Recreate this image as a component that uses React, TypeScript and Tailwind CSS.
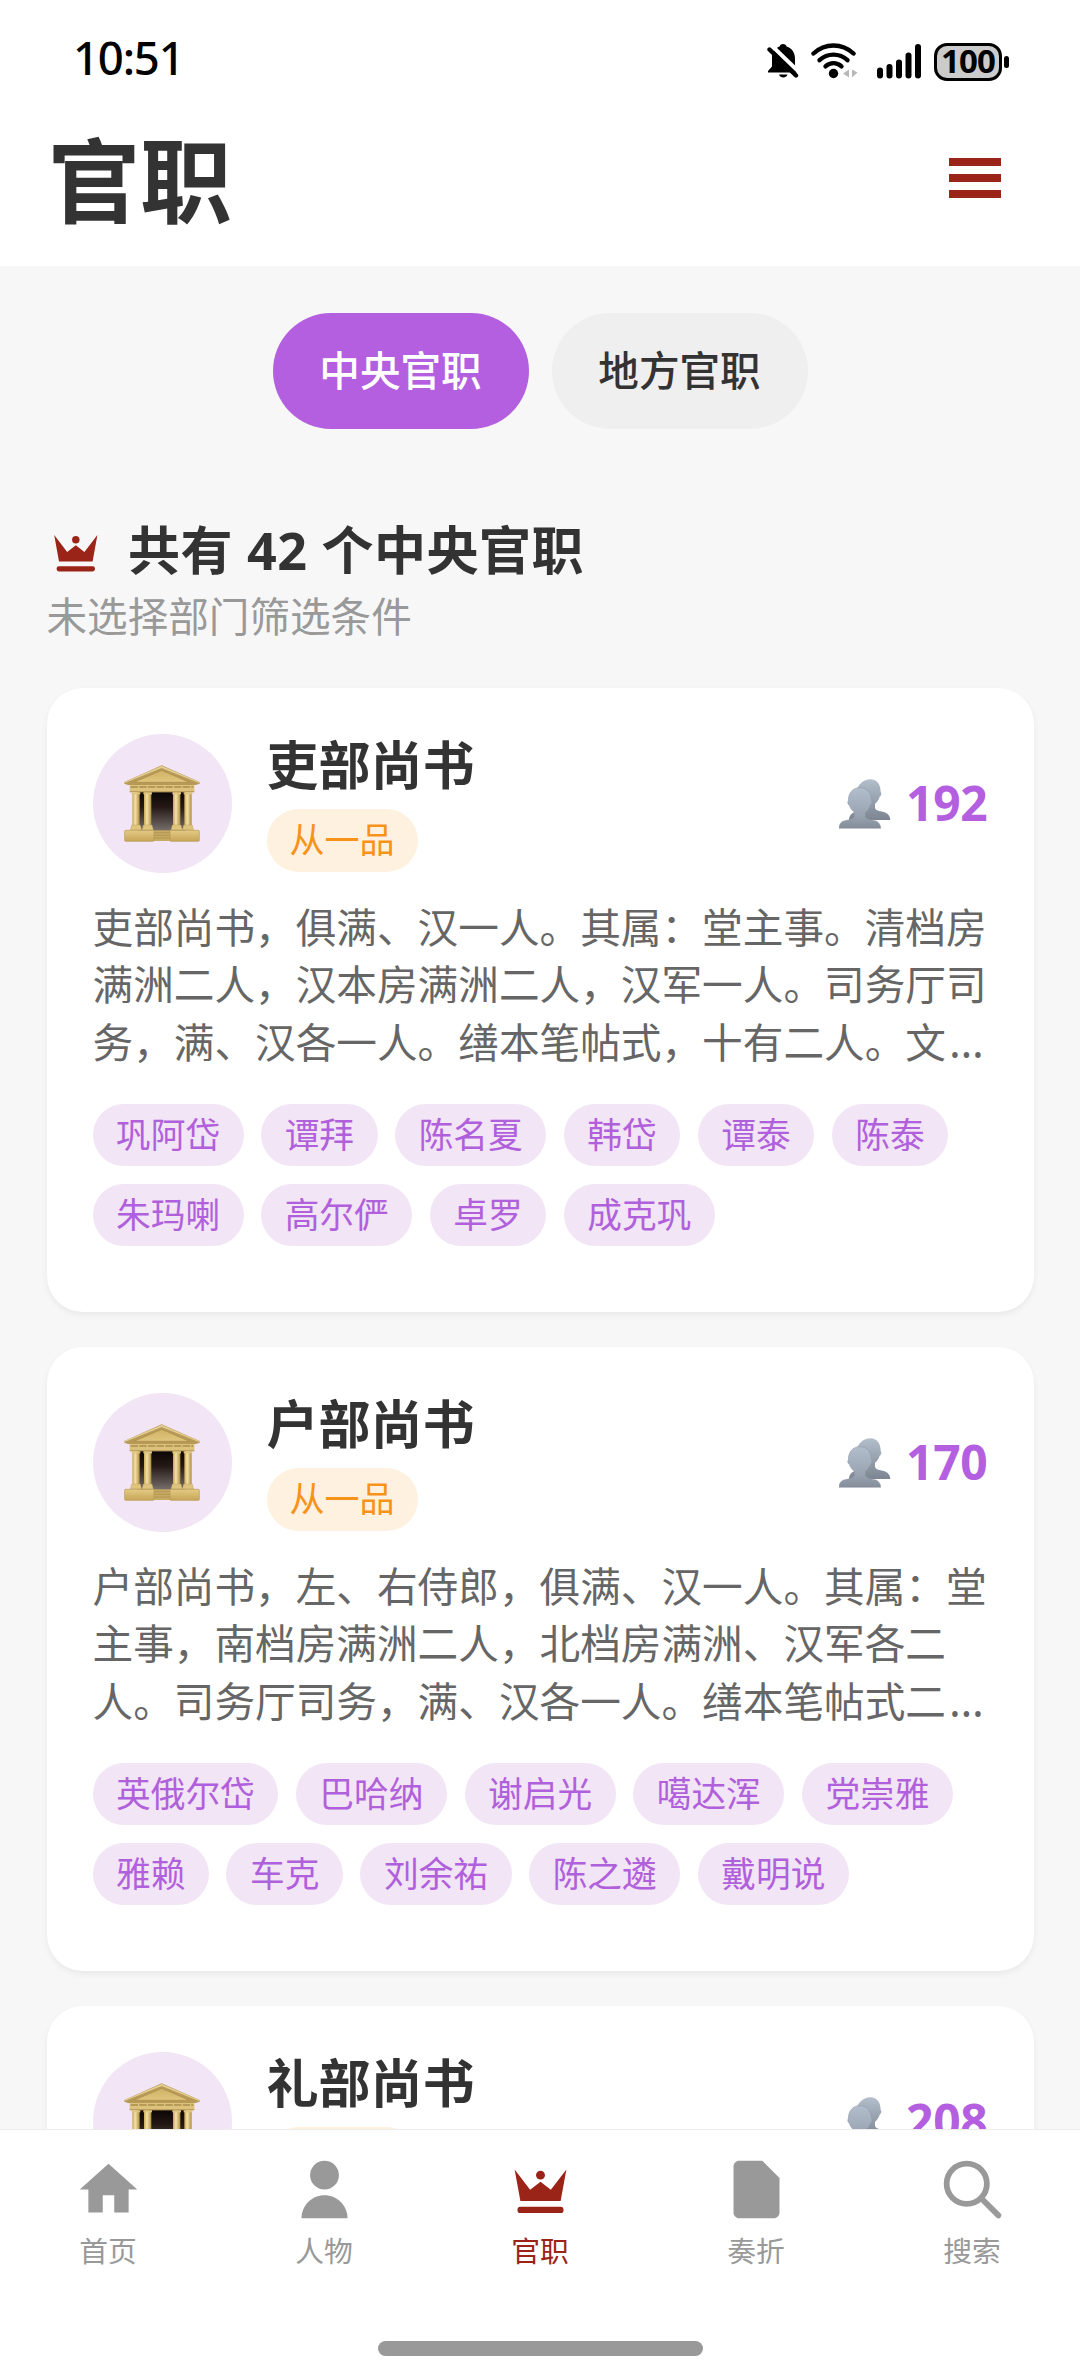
import clsx from 'clsx';
import type { ReactNode } from 'react';

interface Office {
  name: string;
  rank: string;
  count: number;
  summary: string;
  people: string[];
}

const offices: Office[] = [
  {
    name: '吏部尚书',
    rank: '从一品',
    count: 192,
    summary:
      '吏部尚书，俱满、汉一人。其属：堂主事。清档房\n满洲二人，汉本房满洲二人，汉军一人。司务厅司\n务，满、汉各一人。缮本笔帖式，十有二人。文',
    people: ['巩阿岱', '谭拜', '陈名夏', '韩岱', '谭泰', '陈泰', '朱玛喇', '高尔俨', '卓罗', '成克巩'],
  },
  {
    name: '户部尚书',
    rank: '从一品',
    count: 170,
    summary:
      '户部尚书，左、右侍郎，俱满、汉一人。其属：堂\n主事，南档房满洲二人，北档房满洲、汉军各二\n人。司务厅司务，满、汉各一人。缮本笔帖式二',
    people: ['英俄尔岱', '巴哈纳', '谢启光', '噶达浑', '党崇雅', '雅赖', '车克', '刘余祐', '陈之遴', '戴明说'],
  },
  {
    name: '礼部尚书',
    rank: '从一品',
    count: 208,
    summary: '',
    people: [],
  },
];

const CrownShape = () => (
  <>
    <path d="M5 16L3 5l5.4 7.1L12 9.3l3.6 2.8L21 5l-2 11H5z" />
    <circle cx="12" cy="7" r="1.55" />
    <rect x="4" y="18" width="16" height="2.2" rx="1" />
  </>
);

const tabs: { label: string; active?: boolean; icon: ReactNode }[] = [
  { label: '首页', icon: <path d="M10 20v-6h4v6h5v-8h3L12 3 2 12h3v8z" /> },
  {
    label: '人物',
    icon: (
      <>
        <circle cx="12" cy="7" r="5" />
        <path d="M12 14c-4.42 0-8 3.58-8 8h16c0-4.42-3.58-8-8-8z" />
      </>
    ),
  },
  { label: '官职', active: true, icon: <CrownShape /> },
  {
    label: '奏折',
    icon: <path d="M14 2H6c-1.1 0-2 .9-2 2v16c0 1.1.9 2 2 2h12c1.1 0 2-.9 2-2V8l-6-6z" />,
  },
  {
    label: '搜索',
    icon: (
      <g fill="none" stroke="currentColor" strokeWidth="2" strokeLinecap="round">
        <circle cx="10" cy="10" r="7" />
        <path d="M15.2 15.2L21 21" />
      </g>
    ),
  },
];

function StatusBar() {
  return (
    <div className="flex h-[118px] items-center justify-between pl-[73px] pr-[71px] text-black">
      <span className="mb-[2px] text-[45.500px] font-medium leading-none tracking-[-1.200px]">10:51</span>
      <div className="flex items-center">
        {/* Muted bell */}
        <svg className="mt-[4px] h-[36px] w-[32px]" viewBox="0 0 32 36">
          <path
            d="M16 1c2 0 3.300 1 3.600 2.600C25 5.400 28 10 28 15.500V24l2 4v1.500H1V28l4-4.500V14c0-4.600 3-8.800 7.600-10.400C13 2 14.200 1 16 1z"
            fill="#000"
          />
          <path d="M12 31.500h8.500c-.8 2.200-2.400 3-4.200 3s-3.500-.8-4.300-3z" fill="#000" />
          <path d="M4 2l30 29" stroke="#fff" strokeWidth="4" />
          <path d="M2.500 6.500l26.500 26" stroke="#000" strokeWidth="4.400" strokeLinecap="round" />
        </svg>
        {/* Wifi with traffic arrows */}
        <svg className="ml-[12px] mt-[4px] h-[36px] w-[47px]" viewBox="0 0 47 36">
          <g fill="none" stroke="#000" strokeWidth="4.400" strokeLinecap="round">
            <path d="M2.500 10.500C14-.2 31-.2 42.500 10.500" />
            <path d="M8.500 17.200c8-7.400 20-7.400 28 0" />
            <path d="M14.500 23.300c4.700-4.200 11.300-4.200 16 0" />
          </g>
          <circle cx="22.500" cy="30.500" r="4.700" fill="#000" />
          <path d="M38 26.500v8l-6-4zM41 26.500v8l5.500-5z" fill="#b8b8b8" />
        </svg>
        {/* Signal */}
        <svg className="ml-[18px] mt-[4px] h-[36px] w-[46px]" viewBox="0 0 46 36">
          <rect x="1" y="24.500" width="6" height="11" rx="3" />
          <rect x="10.500" y="21" width="6" height="14.500" rx="3" />
          <rect x="20" y="16.500" width="6" height="19" rx="3" />
          <rect x="29.500" y="9.500" width="6" height="26" rx="3" />
          <rect x="39" y="1" width="6" height="34.500" rx="3" />
        </svg>
        <div className="ml-[12px] mt-[5px] flex h-[38px] w-[68px] items-center justify-center rounded-[13px] border-[3px] border-black bg-[#cbcbcb] text-[33px] font-bold leading-none tracking-[-0.8px]">
          <span className="mb-[2px]">100</span>
        </div>
        <div className="ml-[2px] mt-[5px] h-[12px] w-[5px] rounded-full bg-black" />
      </div>
    </div>
  );
}

function TempleIcon() {
  return (
    <svg className="h-[77px] w-[76px]" viewBox="0 0 228 231">
      <defs>
        <linearGradient id="gold" x1="0" y1="0" x2="0" y2="1">
          <stop offset="0" stopColor="#cfb265" />
          <stop offset="1" stopColor="#e0c57d" />
        </linearGradient>
        <linearGradient id="column" x1="0" y1="0" x2="1" y2="0">
          <stop offset="0" stopColor="#c9a654" />
          <stop offset="0.4" stopColor="#f3e2a8" />
          <stop offset="1" stopColor="#b18d41" />
        </linearGradient>
        <linearGradient id="door" x1="0" y1="0" x2="0" y2="1">
          <stop offset="0" stopColor="#0b0504" />
          <stop offset="0.4" stopColor="#241815" />
          <stop offset="1" stopColor="#77706d" />
        </linearGradient>
        <linearGradient id="base" x1="0" y1="0" x2="0" y2="1">
          <stop offset="0" stopColor="#e3cb84" />
          <stop offset="1" stopColor="#c7a557" />
        </linearGradient>
      </defs>
      <path d="M42 78h144v120H42z" fill="url(#door)" />
      <path d="M17 58h194v24H17z" fill="#dcc27a" />
      <path d="M20 66h188" stroke="#a98d4c" strokeWidth="4" strokeDasharray="22 4" />
      <path d="M17 80h194" stroke="#a1854a" strokeWidth="2" />
      <path d="M113 1L227 51v5l-12 4H12L1 56v-5z" fill="#b89a58" />
      <path d="M113 3L225 51v3L113 9 2 54v-3z" fill="#e6d193" />
      <path d="M113 16L196 52H30z" fill="url(#gold)" stroke="#a98a49" strokeWidth="2" />
      {[25, 60, 147, 181].map((x) => (
        <g key={x}>
          <path d={`M${x} 82h22v98h-22z`} fill="url(#column)" />
          <path d={`M${x - 2} 82h26v6h-26z`} fill="#dfc57d" />
          <path d={`M${x - 2} 180h26l4 15h-34z`} fill="#dec47c" stroke="#b59857" strokeWidth="1" />
        </g>
      ))}
      <path d="M88 196h52v32H88z" fill="#c8ab62" />
      <path d="M88 203h52M88 211h52M88 219h52" stroke="#a88c4d" strokeWidth="2" />
      <rect x="2" y="196" width="88" height="33" rx="3" fill="url(#base)" stroke="#b69955" strokeWidth="2" />
      <rect x="138" y="196" width="88" height="33" rx="3" fill="url(#base)" stroke="#b69955" strokeWidth="2" />
    </svg>
  );
}

function PeopleIcon() {
  return (
    <svg className="h-[50px] w-[52px]" viewBox="0 0 156 150">
      <defs>
        <linearGradient id="back" x1="0" y1="0" x2="0" y2="124" gradientUnits="userSpaceOnUse">
          <stop offset="0" stopColor="#b4bfcd" />
          <stop offset="1" stopColor="#7b8490" />
        </linearGradient>
        <linearGradient id="front" x1="0" y1="25" x2="0" y2="149" gradientUnits="userSpaceOnUse">
          <stop offset="0" stopColor="#b3becd" />
          <stop offset="0.7" stopColor="#98a2b0" />
          <stop offset="1" stopColor="#838c98" />
        </linearGradient>
      </defs>
      <path
        d="M94 1c20 0 31 15 31 38 4 3 2 11-3 14-3 9-8 16-14 21v13c3 10 20 9 32 14 9 4 14 12 14 22H30c0-12 7-22 20-24V40C58 16 73 1 94 1z"
        fill="url(#back)"
      />
      <path
        d="M62 26c22 0 35 15 35 38 4 4 2 12-3 15-3 10-8 16-15 21v13c4 9 19 9 32 13 9 4 14 12 14 22H0c0-11 5-19 14-22 13-4 28-4 32-13v-13c-7-5-12-12-15-21-5-3-6-10-3-14 0-23 13-39 34-39z"
        fill="url(#front)"
        stroke="#8b95a4"
        strokeWidth="1.500"
      />
    </svg>
  );
}

function OfficeCard({ office }: { office: Office }) {
  return (
    <article className="h-[624px] shrink-0 rounded-[36px] bg-white px-[46px] pt-[46px] shadow-[0_3px_6px_rgba(0,0,0,0.06)]">
      <div className="flex">
        <div className="flex size-[139px] shrink-0 items-center justify-center rounded-full bg-[#f2e5f5]">
          <TempleIcon />
        </div>
        <div className="ml-[35px] flex flex-1 flex-col items-start">
          <h3 className="text-[52px] font-bold leading-[62px] text-[#333]">{office.name}</h3>
          <span className="mt-[13px] h-[63px] rounded-full bg-[#fff1df] px-[23px] text-[35px] leading-[62px] text-[#f7931a]">
            {office.rank}
          </span>
        </div>
        <div className="flex items-center self-center">
          <PeopleIcon />
          <span className="mb-[2px] ml-[15px] text-[48px] font-bold leading-none tracking-[-0.3px] text-[#b35fe0]">
            {office.count}
          </span>
        </div>
      </div>
      {office.summary && (
        <>
          <p className="mt-[25.500px] whitespace-pre text-[40.650px] leading-[57.7px] text-[#666]">
            {office.summary}
            <span className="ml-[3px] text-[44px] leading-none">…</span>
          </p>
          <div className="mt-[32px] flex flex-wrap gap-x-[17.600px] gap-y-[17.4px]">
            {office.people.map((person) => (
              <span
                key={person}
                className="h-[62.6px] rounded-full bg-[#f2e5f5] px-[23.500px] text-[34.700px] leading-[61px] text-[#b160dc]"
              >
                {person}
              </span>
            ))}
          </div>
        </>
      )}
    </article>
  );
}

export default function App() {
  return (
    <div className="flex h-[2373px] w-[1080px] flex-col overflow-hidden bg-[#f7f7f7] font-['Noto_Sans','Noto_Sans_CJK_SC',sans-serif]">
      <header className="h-[266px] shrink-0 bg-white">
        <StatusBar />
        <div className="flex h-[126px] items-center justify-between pl-[48px] pr-[79px]">
          <h1 className="text-[92px] font-bold leading-[126px] text-[#333]">官职</h1>
          <div className="mb-[7px] flex flex-col gap-[8px]">
            <div className="h-[8px] w-[52px] bg-[#9b2418]" />
            <div className="h-[8px] w-[52px] bg-[#9b2418]" />
            <div className="h-[8px] w-[52px] bg-[#9b2418]" />
          </div>
        </div>
      </header>

      <main className="min-h-0 flex-1 overflow-hidden px-[46.500px] pt-[47px]">
        <div className="flex justify-center gap-[23px] text-[40.6px] font-medium leading-[113px]">
          <button className="h-[116px] w-[256px] rounded-full bg-[#b35fe0] pb-[2px] text-white">中央官职</button>
          <button className="h-[116px] w-[256px] rounded-full bg-[#efefef] pb-[2px] text-[#333]">地方官职</button>
        </div>

        <div className="mt-[90px] flex h-[62px] items-center">
          <svg className="mt-[4px] size-[57.600px] fill-[#9b2418]" viewBox="0 0 24 24">
            <CrownShape />
          </svg>
          <h2 className="ml-[24px] text-[52px] font-bold leading-[62px] tracking-[0.500px] text-[#333]">
            共有 42 个中央官职
          </h2>
        </div>
        <p className="mt-[7px] text-[40.6px] leading-[58px] text-[#999]">未选择部门筛选条件</p>

        <div className="mt-[42px] flex flex-col gap-[35.200px]">
          {offices.map((office) => (
            <OfficeCard key={office.name} office={office} />
          ))}
        </div>
      </main>

      <nav className="flex h-[244px] shrink-0 flex-col items-center justify-between border-t border-[#ececec] bg-white pb-[17px]">
        <div className="grid w-full grid-cols-5 pt-[25px]">
          {tabs.map((tab) => (
            <div
              key={tab.label}
              className={clsx('flex flex-col items-center', tab.active ? 'text-[#9b2418]' : 'text-[#999]')}
            >
              <svg className="size-[69px]" viewBox="0 0 24 24" fill="currentColor">
                {tab.icon}
              </svg>
              <span className="mt-[7px] text-[28.800px] leading-[40px]">{tab.label}</span>
            </div>
          ))}
        </div>
        <div className="h-[15px] w-[325px] rounded-full bg-[#999]" />
      </nav>
    </div>
  );
}
